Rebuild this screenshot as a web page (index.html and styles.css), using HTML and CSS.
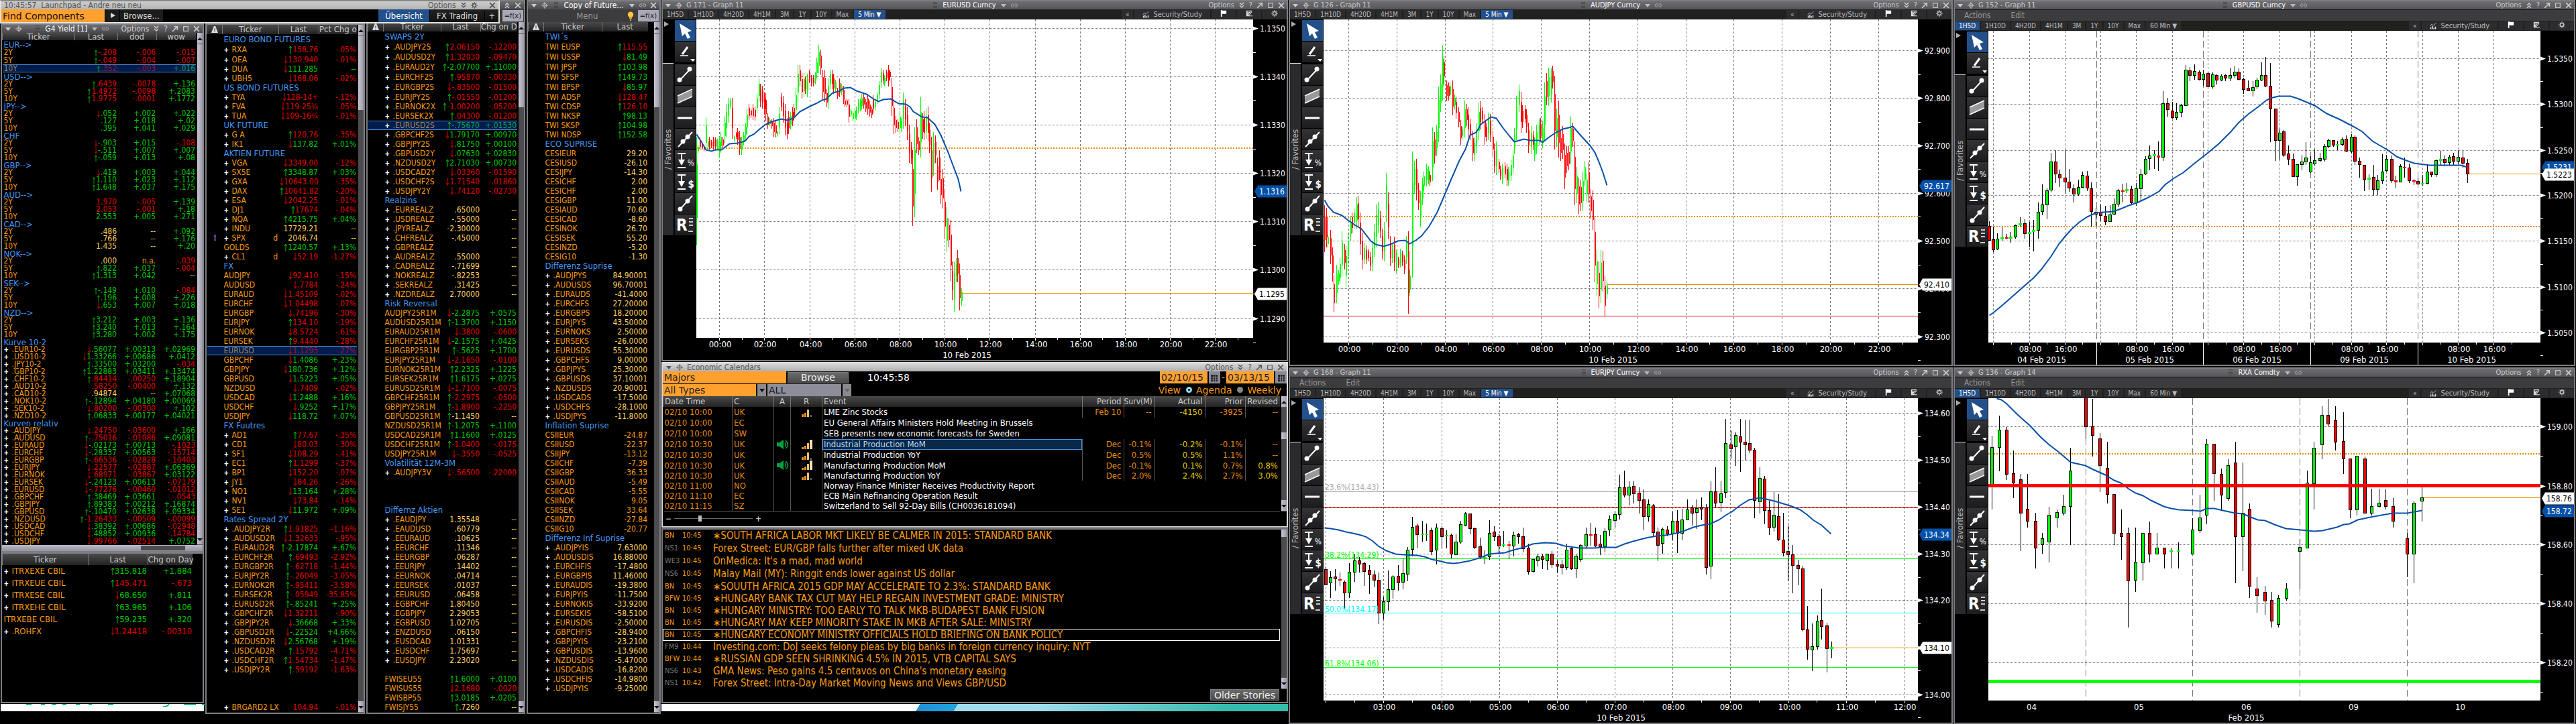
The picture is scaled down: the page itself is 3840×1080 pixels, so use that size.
FILE: index.html
```html
<!DOCTYPE html>
<html lang="de">
<head>
    <meta charset="UTF-8">
    <meta name="viewport" content="width=device-width, initial-scale=1.0">
    <title>Launchpad - Andre neu neu</title>
    <link rel="stylesheet" href="styles.css">
</head>
<body>
    <svg class="sprite" width="0" height="0" aria-hidden="true">
        <symbol id="i-down" viewBox="0 0 10 10"><path d="M1 3h8L5 8z" fill="currentColor"/></symbol>
        <symbol id="i-right" viewBox="0 0 10 10"><path d="M2 1l7 4-7 4z" fill="currentColor"/></symbol>
        <symbol id="i-target" viewBox="0 0 12 12"><circle cx="6" cy="6" r="3.500" fill="none" stroke="currentColor"/><path d="M6 0v12M0 6h12" stroke="currentColor"/></symbol>
        <symbol id="i-grip" viewBox="0 0 6 10"><path d="M1 0v10M3 0v10M5 0v10" stroke="#333" stroke-dasharray="1 1"/></symbol>
        <symbol id="i-link" viewBox="0 0 12 8"><path d="M5 1.500H3a2.500 2.500 0 0 0 0 5h2M7 1.500h2a2.500 2.500 0 0 1 0 5H7M4 4h4" fill="none" stroke="currentColor"/></symbol>
        <symbol id="i-more" viewBox="0 0 8 10"><path d="M1 1l3 3 3-3M1 5l3 3 3-3" fill="none" stroke="currentColor" stroke-width="1.500"/></symbol>
        <symbol id="i-less" viewBox="0 0 8 10"><path d="M1 5l3-3 3 3M1 9l3-3 3 3" fill="none" stroke="currentColor" stroke-width="1.500"/></symbol>
        <symbol id="i-pop" viewBox="0 0 9 9"><path d="M1 8l6-6M3 1.500h4.500V6" fill="none" stroke="currentColor" stroke-width="1.400"/></symbol>
        <symbol id="i-max" viewBox="0 0 9 9"><rect x="1.500" y="1.500" width="6" height="6" fill="none" stroke="currentColor"/></symbol>
        <symbol id="i-close" viewBox="0 0 9 9"><path d="M1 1l7 7M8 1L1 8" stroke="currentColor" stroke-width="1.400"/></symbol>
        <symbol id="i-gear" viewBox="0 0 12 12"><circle cx="6" cy="6" r="3" fill="none" stroke="currentColor" stroke-width="1.600"/><path d="M6 0v3M6 9v3M0 6h3M9 6h3M2 2l2 2M8 8l2 2M10 2L8 4M4 8l-2 2" stroke="currentColor" stroke-width="1.400"/></symbol>
        <symbol id="i-flag" viewBox="0 0 12 12"><path d="M1 0h2v1h8v6H3v5H1z" fill="#fff"/></symbol>
        <symbol id="i-note" viewBox="0 0 12 12"><path d="M1 1h10v3L6 10h6v1H1z" fill="#ddd"/><path d="M3 3h5M3 5h3M10 2L5 9" stroke="#222"/></symbol>
        <symbol id="i-study" viewBox="0 0 13 12"><path d="M1 6l3-4 3 3 5-5" fill="none" stroke="#ddd"/><path d="M2 12V8M5 12V6M8 12V9M11 12V7" stroke="#ddd" stroke-width="2"/></symbol>
        <symbol id="i-bulb" viewBox="0 0 10 15"><circle cx="5" cy="5" r="4.500" fill="#ffc83c"/><path d="M3 9h4v3H3z" fill="#e8a820"/><path d="M4 13h2v2H4z" fill="#ccc"/></symbol>
        <symbol id="i-warn" viewBox="0 0 9 9"><path d="M3.500 0h2L9 9H0z" fill="#ddd"/><path d="M4.500 3v3M4.500 7v1" stroke="#333"/></symbol>
        <symbol id="i-up" viewBox="0 0 6 12"><path d="M3 1v11M1 4l2-3 2 3" fill="none" stroke="#00c800"/></symbol>
        <symbol id="i-dn" viewBox="0 0 6 12"><path d="M3 0v11M1 8l2 3 2-3" fill="none" stroke="#a80000" stroke-width="1.300"/></symbol>
        <symbol id="i-bars4" viewBox="0 0 16 14"><path d="M0 11h3v3H0zM4 9h3v5H4z" fill="#e89020"/><path d="M8 5h3v9H8z" fill="#ffc070"/><path d="M12 0h4v14h-4z" fill="#ffe0b0"/></symbol>
        <symbol id="i-bars3" viewBox="0 0 16 14"><path d="M0 10h3v4H0zM4 8h3v6H4z" fill="#e89020"/><path d="M8 3h3v11H8z" fill="#ffc070"/><path d="M12 11h3v3h-3z" fill="#555"/></symbol>
        <symbol id="i-sound" viewBox="0 0 18 14"><path d="M0 4h4l6-4v14l-6-4H0z" fill="#00a040"/><path d="M12 4q3 3 0 6M13 1q7 6 0 12" fill="none" stroke="#00a040" stroke-width="1.500"/></symbol>
        <symbol id="i-cal" viewBox="0 0 10 10"><rect width="10" height="10" fill="#222"/><path d="M0 3.500h10M0 6.500h10M3.500 1v9M6.500 1v9" stroke="#8a8a98"/></symbol>
        <symbol id="t-cursor" viewBox="0 0 31 31"><path d="M7 5l18 11-6 2 4 8-4 2-4-8-4 4z" fill="#fff"/></symbol>
        <symbol id="t-draw" viewBox="0 0 31 31"><path d="M19 8l-8 11" stroke="#fff" stroke-width="3"/><path d="M8 21h12" stroke="#fff" stroke-width="1.500"/><path d="M23 26h7l-3 4z" fill="#fff"/></symbol>
        <symbol id="t-trend" viewBox="0 0 31 31"><path d="M8 23L22 8" stroke="#fff" stroke-width="2"/><circle cx="7" cy="23" r="3.500" fill="#fff"/><circle cx="22" cy="7" r="3.500" fill="#fff"/></symbol>
        <symbol id="t-channel" viewBox="0 0 31 31"><path d="M4 15L26 5v11L4 26z" fill="#999"/><path d="M4 15L26 5M4 26l22-10" stroke="#fff" stroke-width="1.500"/></symbol>
        <symbol id="t-hline" viewBox="0 0 31 31"><path d="M4 16h22" stroke="#fff" stroke-width="3"/></symbol>
        <symbol id="t-ray" viewBox="0 0 31 31"><path d="M5 27L26 5" stroke="#fff" stroke-width="2"/><circle cx="12" cy="19" r="3.500" fill="#fff"/><circle cx="19" cy="12" r="3.500" fill="#fff"/></symbol>
        <symbol id="t-range" viewBox="0 0 31 31"><path d="M4 5h12M10 5v12M4 26h12" stroke="#fff" stroke-width="2"/><path d="M5 14h10l-5 9z" fill="#fff"/></symbol>
        <symbol id="t-seg" viewBox="0 0 31 31"><path d="M8 24L26 4" stroke="#fff" stroke-width="2"/><circle cx="8" cy="24" r="3.500" fill="#fff"/><circle cx="19" cy="12" r="3.500" fill="#fff"/></symbol>
        <symbol id="t-reg" viewBox="0 0 31 31"><path d="M21 6h6M21 11h6M21 16h6M20 25h7" stroke="#fff" stroke-width="1.500"/></symbol>
    </svg>

    <div class="desk">
        <header class="launchpad">
            <div class="lp-title">
                <span>10:45:57&nbsp; Launchpad - Andre neu neu</span>
                <span class="tools"><span>Options</span><svg class="ic"><use href="#i-more"/></svg><svg class="ic gap"><use href="#i-gear"/></svg><span>_</span><svg class="ic"><use href="#i-close"/></svg></span>
            </div>
            <div class="lp-bar">
                <input class="find" type="text" value="Find Components" aria-label="Find Components">
                <button class="lp-btn go" aria-label="Go"><svg class="ic"><use href="#i-right"/></svg></button>
                <button class="lp-btn">Browse...</button>
                <span class="spacer"></span>
                <button class="lp-tab active">Übersicht</button>
                <button class="lp-tab">FX Trading</button>
                <button class="lp-tab">+</button>
            </div>
        </header>

        <section class="col col-a">
            <div class="win">
                <div class="win-title">
                    <span class="tools"><svg class="ic"><use href="#i-down"/></svg><svg class="ic"><use href="#i-target"/></svg></span>
                    <span class="tools name"><svg class="ic"><use href="#i-grip"/></svg>G4 Yield [1]<svg class="ic"><use href="#i-down"/></svg><svg class="ic"><use href="#i-link"/></svg></span>
                    <span class="tools"><span>Options</span><svg class="ic"><use href="#i-more"/></svg><span>?</span><svg class="ic"><use href="#i-pop"/></svg><svg class="ic"><use href="#i-max"/></svg><svg class="ic"><use href="#i-close"/></svg></span>
                </div>
                <div class="win-body">
                    <table class="quotes dense" id="yields"></table>
                    <div class="scroll full"><i class="up"></i><i class="dn"></i></div>
                </div>
                <div class="hscroll"><i></i></div>
            </div>
            <div class="win grow">
                <table class="quotes roomy" id="itraxx"></table>
            </div>
            <div class="wallpaper"><svg width="304" height="5"><path d="M38 1h8M60 1h6M76 1h7M92 1h6M112 1h6M131 1h5M160 1h8M242 4q6 1 9-4M273 1h18M300 1h4" fill="none" stroke="#10c080" stroke-width="2"/></svg></div>
        </section>

        <section class="col col-b">
            <div class="win grow">
                <div class="win-body">
                    <table class="quotes" id="futures"></table>
                    <div class="scroll"><i class="up"></i><i class="thumb"></i><i class="dn"></i></div>
                </div>
            </div>
        </section>

        <section class="col col-c">
            <div class="win grow">
                <div class="win-title"><span></span><span class="tools"><svg class="ic"><use href="#i-less"/></svg><svg class="ic"><use href="#i-close"/></svg></span></div>
                <div class="win-menu"><span></span><button class="fx">=f(x)</button></div>
                <div class="win-body">
                    <table class="quotes" id="swaps"></table>
                    <div class="scroll"><i class="up"></i><i class="thumb"></i><i class="dn"></i></div>
                </div>
            </div>
        </section>

        <section class="col col-d">
            <div class="win grow">
                <div class="win-title">
                    <span class="tools"><svg class="ic"><use href="#i-down"/></svg><svg class="ic"><use href="#i-target"/></svg></span>
                    <span class="tools name"><svg class="ic"><use href="#i-grip"/></svg>Copy of Future...</span>
                    <span class="tools"><svg class="ic"><use href="#i-down"/></svg><svg class="ic"><use href="#i-link"/></svg><svg class="ic"><use href="#i-close"/></svg></span>
                </div>
                <div class="win-menu"><span class="menu-word">Menu</span><svg class="bulb"><use href="#i-bulb"/></svg><button class="fx">=f(x)</button></div>
                <div class="win-body wide-gap">
                    <table class="quotes" id="twi"></table>
                    <div class="scroll"><i class="up"></i><i class="thumb"></i><i class="dn"></i></div>
                </div>
            </div>
        </section>

        <section class="col col-e">
            <div class="chart-win" data-chart="eurusd"></div>

            <div class="win light calendar">
                <div class="win-title">
                    <span class="tools"><svg class="ic"><use href="#i-down"/></svg><svg class="ic"><use href="#i-target"/></svg><span>Economic Calendars</span></span>
                    <span class="tools"><span>Options</span><svg class="ic"><use href="#i-more"/></svg><span>?</span><svg class="ic"><use href="#i-pop"/></svg><svg class="ic"><use href="#i-max"/></svg><svg class="ic"><use href="#i-close"/></svg></span>
                </div>
                <div class="cal-row">
                    <input class="amber majors" type="text" value="Majors" aria-label="Region">
                    <button class="grey-btn browse">Browse</button>
                    <span class="clock">10:45:58</span>
                    <span class="spacer"></span>
                    <input class="amber date" type="text" value="02/10/15" aria-label="From">
                    <button class="cal-btn" aria-label="Pick start date"><svg class="ic"><use href="#i-cal"/></svg></button>
                    <span class="amber-text">-</span>
                    <input class="amber date" type="text" value="03/13/15" aria-label="To">
                    <button class="cal-btn" aria-label="Pick end date"><svg class="ic"><use href="#i-cal"/></svg></button>
                </div>
                <div class="cal-row">
                    <select class="amber types" aria-label="Event types"><option>All Types</option></select>
                    <span class="pick"><svg class="ic"><use href="#i-down"/></svg></span>
                    <select class="all" aria-label="Filter"><option>ALL</option></select>
                    <span class="pick off"><svg class="ic"><use href="#i-down"/></svg></span>
                    <span class="spacer"></span>
                    <span class="amber-text view">View
                        <label><input type="radio" name="view" checked>Agenda</label>
                        <label><input type="radio" name="view">Weekly</label>
                    </span>
                </div>
                <div class="win-body">
                    <table class="events">
                        <colgroup><col class="w-date"><col class="w-c"><col class="w-a"><col class="w-r"><col><col class="w-period"><col class="w-surv"><col class="w-actual"><col class="w-prior"><col class="w-rev"></colgroup>
                        <thead>
                            <tr><th>Date Time</th><th>C</th><th class="mid">A</th><th class="mid">R</th><th>Event</th><th class="num">Period</th><th class="surv">Surv(M)</th><th class="num">Actual</th><th class="num">Prior</th><th class="num">Revised</th></tr>
                        </thead>
                        <tbody>
                            <tr><td>02/10 10:00</td><td>UK</td><td></td><td class="mid"><svg class="sig"><use href="#i-bars3"/></svg></td><td class="ev">LME Zinc Stocks</td><td class="num">Feb 10</td><td class="num">--</td><td class="num act">-4150</td><td class="num">-3925</td><td class="num">--</td></tr>
                            <tr><td>02/10 10:00</td><td>EC</td><td></td><td></td><td class="ev" colspan="6">EU General Affairs Ministers Hold Meeting in Brussels</td></tr>
                            <tr><td>02/10 10:00</td><td>SW</td><td></td><td></td><td class="ev" colspan="6">SEB presents new economic forecasts for Sweden</td></tr>
                            <tr><td>02/10 10:30</td><td>UK</td><td class="mid"><svg class="snd"><use href="#i-sound"/></svg></td><td class="mid"><svg class="sig"><use href="#i-bars4"/></svg></td><td class="ev picked">Industrial Production MoM</td><td class="num">Dec</td><td class="num">-0.1%</td><td class="num act">-0.2%</td><td class="num">-0.1%</td><td class="num">--</td></tr>
                            <tr><td>02/10 10:30</td><td>UK</td><td></td><td class="mid"><svg class="sig"><use href="#i-bars3"/></svg></td><td class="ev">Industrial Production YoY</td><td class="num">Dec</td><td class="num">0.5%</td><td class="num act">0.5%</td><td class="num">1.1%</td><td class="num">--</td></tr>
                            <tr><td>02/10 10:30</td><td>UK</td><td class="mid"><svg class="snd"><use href="#i-sound"/></svg></td><td class="mid"><svg class="sig"><use href="#i-bars4"/></svg></td><td class="ev">Manufacturing Production MoM</td><td class="num">Dec</td><td class="num">-0.1%</td><td class="num act">0.1%</td><td class="num">0.7%</td><td class="num act">0.8%</td></tr>
                            <tr><td>02/10 10:30</td><td>UK</td><td></td><td class="mid"><svg class="sig"><use href="#i-bars3"/></svg></td><td class="ev">Manufacturing Production YoY</td><td class="num">Dec</td><td class="num">2.0%</td><td class="num act">2.4%</td><td class="num">2.7%</td><td class="num act">3.0%</td></tr>
                            <tr><td>02/10 11:00</td><td>NO</td><td></td><td></td><td class="ev" colspan="6">Norway Finance Minister Receives Productivity Report</td></tr>
                            <tr><td>02/10 11:10</td><td>EC</td><td></td><td></td><td class="ev" colspan="6">ECB Main Refinancing Operation Result</td></tr>
                            <tr><td>02/10 11:15</td><td>SZ</td><td></td><td></td><td class="ev" colspan="6">Switzerland to Sell 92-Day Bills (CH0036181094)</td></tr>
                        </tbody>
                    </table>
                    <div class="scroll mid-thumb"><i class="up"></i><i class="thumb"></i><i class="dn"></i></div>
                </div>
                <div class="zoom-row"><span>−</span><input type="range" value="32" aria-label="Zoom"><span>+</span></div>
            </div>

            <div class="win news">
                <div class="win-body">
                    <ul class="stories">
                        <li><b>BN</b><time>10:45</time>∗SOUTH AFRICA LABOR MKT LIKELY BE CALMER IN 2015: STANDARD BANK</li>
                        <li><b class="dim">NS1</b><time>10:45</time>Forex Street: EUR/GBP falls further after mixed UK data</li>
                        <li><b class="dim">WE3</b><time>10:45</time>OnMedica: It's a mad, mad world</li>
                        <li><b class="dim">NS6</b><time>10:45</time>Malay Mail (MY): Ringgit ends lower against US dollar</li>
                        <li><b>BN</b><time>10:45</time>∗SOUUTH AFRICA 2015 GDP MAY ACCELERATE TO 2.3%: STANDARD BANK</li>
                        <li><b>BFW</b><time>10:45</time>∗HUNGARY BANK TAX CUT MAY HELP REGAIN INVESTMENT GRADE: MINISTRY</li>
                        <li><b>BN</b><time>10:45</time>∗HUNGARY MINISTRY: TOO EARLY TO TALK MKB-BUDAPEST BANK FUSION</li>
                        <li><b>BN</b><time>10:45</time>∗HUNGARY MAY KEEP MINORITY STAKE IN MKB AFTER SALE: MINISTRY</li>
                        <li class="boxed"><b>BN</b><time>10:45</time>∗HUNGARY ECONOMY MINISTRY OFFICIALS HOLD BRIEFING ON BANK POLICY</li>
                        <li><b class="dim">FM9</b><time>10:44</time>Investing.com: DoJ seeks felony pleas by big banks in foreign currency inquiry: NYT</li>
                        <li><b>BFW</b><time>10:44</time>∗RUSSIAN GDP SEEN SHRINKING 4.5% IN 2015, VTB CAPITAL SAYS</li>
                        <li><b class="dim">NS6</b><time>10:43</time>GMA News: Peso gains 4.5 centavos on China's monetary easing</li>
                        <li><b class="dim">NS1</b><time>10:42</time>Forex Street: Intra-Day Market Moving News and Views GBP/USD</li>
                    </ul>
                    <div class="scroll low-thumb"><i class="thumb"></i><i class="dn"></i></div>
                </div>
                <div class="news-foot"><button class="grey-btn">Older Stories</button></div>
            </div>
            <div class="wallpaper swoosh"></div>
        </section>

        <section class="col col-f">
            <div class="chart-win" data-chart="audjpy"></div>
            <div class="chart-win" data-chart="eurjpy"></div>
        </section>

        <section class="col col-f">
            <div class="chart-win" data-chart="gbpusd"></div>
            <div class="chart-win" data-chart="rxa"></div>
        </section>
    </div>

    <script src="script.js"></script>
</body>
</html>
```
FILE: styles.css
```css
* {
    box-sizing: border-box;
}
body {
    margin: 0;
    background: #000;
    color: #ccc;
    font-family: "DejaVu Sans Condensed", "DejaVu Sans", sans-serif;
    font-size: 12px;
    line-height: 14px;
}
button, input, select {
    font-family: inherit;
    margin: 0;
    padding: 0;
    border: 0;
    border-radius: 0;
}
.sprite {
    position: absolute;
}
.desk {
    position: relative;
    display: grid;
    grid-template-columns: minmax(0, 305fr) minmax(0, 240fr) minmax(0, 239fr) minmax(0, 202fr) minmax(0, 935fr) minmax(0, 991fr) minmax(0, 928fr);
    min-height: 100vh;
}
.col {
    display: flex;
    flex-direction: column;
    min-width: 0;
}
.col-a {
    padding: 35px 1px 19px 1px;
}
.col-b {
    padding: 35px 1px 15px;
}
.col-c, .col-d {
    padding: 0 1px 15px;
}
.col-e {
    padding: 0 1px 19px 0;
    gap: 1px;
}
.col-f {
    display: grid;
    grid-template-rows: 546fr 532fr;
    gap: 2px;
    padding-right: 1px;
}
.grow {
    flex: 1;
}
.spacer {
    flex: 1;
}
.ic {
    width: 10px;
    height: 10px;
    flex: none;
}

/* launchpad strip */
.launchpad {
    position: absolute;
    z-index: 2;
    top: 0;
    left: 0;
    width: 19.4%;
    height: 35px;
    border: 2px solid #e4e4dc;
    border-top-color: #888;
    background: #000;
    font-size: 12px;
}
.lp-title {
    display: flex;
    justify-content: space-between;
    height: 12px;
    padding: 0 4px;
    background: linear-gradient(#ccc, #b4b4b4);
    color: #555;
    line-height: 12px;
}
.lp-bar {
    display: flex;
    gap: 1px;
    height: 19px;
}
.find {
    width: 154px;
    padding-left: 2px;
    background: #ffa02f;
    color: #111;
    font-family: "DejaVu Sans", sans-serif;
    font-size: 14px;
}
.lp-btn, .lp-tab {
    padding: 0 5px;
    background: #1c1c1c;
    color: #ddd;
    font-size: 13px;
}
.lp-btn.go {
    width: 21px;
}
.lp-tab {
    padding: 0 10px;
    background: linear-gradient(#222, #111);
}
.lp-tab:last-child {
    padding: 0 5px;
}
.lp-tab.active {
    background: #24508a;
    color: #fff;
}

/* windows */
.win {
    display: flex;
    flex-direction: column;
    border: 2px solid #7d7d82;
    background: #000;
}
.win-title {
    display: flex;
    justify-content: space-between;
    height: 12px;
    padding: 0 4px;
    background: linear-gradient(#6e6e72, #4a4a4e);
    line-height: 12px;
}
.light {
    border-color: #dcdcdc;
}
.light .win-title {
    background: linear-gradient(#d8d8d8, #b0b0b0);
    color: #555;
}
.tools {
    display: flex;
    align-items: center;
    gap: 6px;
}
.tools.name {
    color: #fff;
}
.tools.name .ic {
    color: #bbb;
}
.win-menu {
    display: flex;
    justify-content: space-between;
    align-items: center;
    height: 19px;
    padding: 0 1px;
    background: #3c3c3e;
}
.menu-word {
    flex: 1;
    padding-left: 34px;
    color: #999;
    font-size: 13px;
    text-align: center;
}
.bulb {
    width: 10px;
    height: 14px;
    margin: 0 6px;
}
.fx {
    height: 17px;
    padding: 0 3px;
    background: #a9a9b8;
    color: #222;
    font-size: 11px;
}
.win-body {
    display: flex;
    flex: 1;
    align-items: flex-start;
    gap: 2px;
}
.win-body.wide-gap {
    gap: 9px;
}
.scroll {
    display: flex;
    flex: none;
    flex-direction: column;
    align-self: stretch;
    width: 8px;
    background: #4c4c4e;
}
.scroll i {
    background: linear-gradient(90deg, #c8c8d4, #9a9aa8);
}
.scroll .up, .scroll .dn {
    height: 17px;
    border-bottom: 1px solid #555;
}
.scroll .up::before, .scroll .dn::before {
    content: "";
    display: block;
    margin-top: 7px;
    border: 4px solid transparent;
    border-top: 0;
    border-bottom: 4px solid #111;
}
.scroll .dn {
    margin-top: auto;
}
.scroll .dn::before {
    border-top: 4px solid #111;
    border-bottom: 0;
}
.scroll .thumb {
    height: 110px;
}
.scroll.full {
    background: linear-gradient(90deg, #c8c8d4, #9a9aa8);
}
.scroll.mid-thumb .thumb {
    height: 10px;
    margin-top: 37px;
}
.scroll.low-thumb .thumb {
    height: 11px;
}
.hscroll {
    height: 9px;
    padding: 1px 26px 1px 85px;
    background: linear-gradient(#bbbbc8, #9292a0);
}
.hscroll i {
    display: block;
    width: 66px;
    height: 7px;
    margin-left: auto;
    background: #4c4c4e;
}

/* quote tables */
table {
    flex: 1;
    width: 100%;
    table-layout: fixed;
    border-collapse: collapse;
}
th {
    padding: 0;
    border-left: 1px solid #777;
    background: linear-gradient(#4a4a4a, #222);
    color: #ccc;
    font-size: 13px;
    font-weight: normal;
    white-space: nowrap;
}
td {
    padding: 0 1px 0 2px;
    white-space: nowrap;
}
.quotes tr {
    height: 14px;
}
.quotes tbody tr:nth-child(-n+3) {
    height: 15px;
}
#swaps tbody tr:nth-child(-n+7), #twi tbody tr:nth-child(-n+7) {
    height: 15px;
}
.quotes td, .quotes th {
    line-height: 14px;
}
.quotes th .ic {
    display: block;
    margin: 0 auto;
}
.quotes.dense tr, .quotes.dense tbody tr {
    height: 11px;
}
.quotes.dense tbody tr:nth-child(-n+5) {
    height: 12px;
}
.quotes.dense td, .quotes.dense th {
    line-height: 11px;
}
.quotes.roomy {
    flex: none;
    width: 95%;
    font-size: 13px;
}
.quotes.roomy tbody tr {
    height: 18px;
}
.quotes.roomy td {
    line-height: 18px;
}
.quotes.roomy th {
    line-height: 17px;
}
.num, .quotes td.num {
    text-align: right;
}
.mid {
    text-align: center;
}
.ticker {
    color: #f59a14;
}
.ticker.open::before {
    content: "+";
    display: inline-block;
    width: 12px;
    color: #fff;
    font-size: 10px;
    font-weight: bold;
    line-height: 10px;
}
.ticker .flag {
    float: right;
}
.bang {
    color: #a060e0;
    font-weight: bold;
    text-align: center;
}
.section {
    color: #4496f0;
    font-size: 13px;
}
.g { color: #00c800; }
.r { color: #e00000; }
.y { color: #ffd060; }
.o { color: #f59a14; }
.arrow {
    width: 6px;
    height: 12px;
    margin-top: 1px;
    vertical-align: top;
}
.dense .arrow {
    height: 10px;
}
.roomy .arrow {
    margin-top: 3px;
}
.sel {
    background: #001c4c;
    box-shadow: inset 0 1px #4a90d8, inset 0 -1px #4a90d8;
}
.sel .ticker {
    color: #a08868;
}
.sel .r {
    color: #a01040;
}
.sel .g {
    color: #10a058;
}

.wallpaper {
    height: 11px;
    margin-top: 1px;
    background: #fff;
    line-height: 5px;
}
.wallpaper svg {
    display: block;
}
.swoosh {
    margin: 0;
    background: linear-gradient(120deg, #fff 41%, #2090d8 41%, #20a4dc 47%, #a0dcec 47%, #a0dcec 60%, #34bcac 90%);
}

/* economic calendar */
.calendar {
    height: 247px;
}
.cal-row {
    display: flex;
    align-items: center;
    height: 19px;
    gap: 2px;
    color: #fff;
    font-family: "DejaVu Sans", sans-serif;
    font-size: 14px;
}
.cal-row input[type="text"], .cal-row select {
    height: 18px;
    padding-left: 2px;
    font-size: 14px;
    appearance: none;
}
.cal-row .amber {
    background: #ffa02f;
    color: #222;
}
.majors {
    width: 184px;
}
.types {
    width: 139px;
}
.all {
    width: 110px;
    background: #8e8e9a;
    color: #111;
}
.date {
    width: 71px;
}
.pick {
    display: flex;
    align-items: center;
    justify-content: center;
    width: 13px;
    height: 18px;
    background: #8a8a8e;
    color: #111;
}
.pick.off {
    color: #666;
}
.grey-btn {
    height: 17px;
    padding: 0 5px;
    border: 1px solid #777;
    background: linear-gradient(#6a6a6a, #4a4a4a);
    color: #eee;
    font-family: "DejaVu Sans", sans-serif;
    font-size: 14px;
    line-height: 14px;
}
.browse {
    width: 91px;
}
.clock {
    margin-left: 26px;
}
.cal-btn {
    width: 17px;
    height: 18px;
    padding-top: 2px;
    background: #8a8a98;
    line-height: 10px;
}
.amber-text {
    color: #f59a14;
}
.view {
    display: flex;
    gap: 8px;
    padding-right: 8px;
}
.view label {
    display: flex;
    align-items: center;
    gap: 6px;
}
.view input {
    width: 9px;
    height: 9px;
    border-radius: 50%;
    background: #888;
    appearance: none;
}
.view input:checked {
    border: 3px solid #90d8f4;
    background: #000;
}
.events {
    border-bottom: 1px solid #555;
    font-size: 13px;
}
.events th {
    height: 16px;
    padding: 0 2px;
    text-align: left;
}
.events .num {
    padding-right: 3px;
    text-align: right;
}
.events th.surv {
    padding: 0;
    font-size: 12px;
}
.events .mid {
    text-align: center;
}
.events tbody tr {
    height: 15px;
}
.events tbody tr:nth-child(-n+5) {
    height: 16px;
}
.events td {
    border-left: 1px solid #555;
    color: #e88a10;
    line-height: 15px;
}
.events td:first-child {
    border-left: 0;
}
.events .ev {
    color: #fff;
}
.events .act {
    color: #e0c800;
}
.events .picked {
    background: #0a2848;
    box-shadow: inset 0 0 0 1px #4a90d8;
    color: #b8d8f8;
}
.w-date { width: 103px; }
.w-c { width: 62px; }
.w-a { width: 25px; }
.w-r { width: 47px; }
.w-period { width: 62px; }
.w-surv { width: 45px; }
.w-actual { width: 76px; }
.w-prior { width: 60px; }
.w-rev { width: 52px; }
.sig, .snd {
    display: block;
    width: 16px;
    height: 14px;
    margin: 0 auto;
}
.snd {
    width: 18px;
}
.zoom-row {
    display: flex;
    align-items: center;
    gap: 4px;
    height: 23px;
    padding: 0 4px;
    color: #bbb;
    font-weight: bold;
}
.zoom-row input {
    width: 117px;
    height: 9px;
    background: linear-gradient(#666, #666) center / 100% 1px no-repeat;
    appearance: none;
}
.zoom-row input::-webkit-slider-thumb {
    width: 5px;
    height: 9px;
    background: #bbb;
    appearance: none;
}

/* news */
.news {
    height: 261px;
}
.stories {
    flex: 1;
    margin: 0;
    padding: 0;
    list-style: none;
}
.stories li {
    display: flex;
    height: 18px;
    padding-left: 3px;
    color: #f59a14;
    font-size: 15px;
    line-height: 18px;
    white-space: nowrap;
}
.stories li:nth-child(-n+4) {
    height: 19px;
}
.stories b {
    width: 26px;
    font-size: 11px;
    font-weight: normal;
}
.stories time {
    width: 46px;
    font-size: 11px;
}
.stories .dim {
    color: #777;
}
.stories .boxed {
    box-shadow: inset 0 0 0 1px #fff;
}
.news-foot {
    height: 19px;
    padding-right: 11px;
    text-align: right;
}

/* chart windows */
.chart-win {
    display: flex;
    flex-direction: column;
    flex: 1;
    min-height: 320px;
    border: 2px solid #7d7d82;
    background: #000;
    font-size: 11px;
}
.chart-title {
    display: grid;
    grid-template-columns: 1fr auto 1fr;
    height: 12px;
    padding: 0 3px;
    background: linear-gradient(#6e6e72, #55555a);
    line-height: 12px;
}
.chart-title .tools:last-child {
    justify-content: flex-end;
}
.chart-menu {
    display: flex;
    gap: 30px;
    height: 17px;
    padding: 0 14px;
    border-top: 1px solid #111;
    background: #3c3c3e;
    color: #999;
    font-size: 12px;
    line-height: 16px;
}
.chart-bar {
    display: flex;
    gap: 2px;
    height: 15px;
    padding: 1px 0;
    background: #20201e;
}
.chart-bar button {
    padding: 0 6px;
    background: #2c2c2e;
    color: #bbb;
    font-size: 10px;
    line-height: 12px;
}
.chart-bar button.on {
    background: #24508a;
    color: #fff;
}
.chart-bar .study {
    display: flex;
    align-items: center;
    gap: 6px;
    padding: 0 12px;
    font-size: 11px;
}
.chart-bar .wide {
    width: 36px;
}
.chart-main {
    display: flex;
    flex: 1;
    min-height: 0;
}
.palette {
    display: flex;
    flex: none;
    gap: 2px;
    width: 50px;
}
.fav {
    width: 16px;
}
.fav .knob {
    height: 66px;
    padding-top: 2px;
    border-bottom: 1px solid #ddd;
    color: #aaa;
}
.fav .label {
    height: 256px;
    background: #2a2a2c;
    color: #bbb;
    font-size: 13px;
    line-height: 16px;
    text-align: center;
    writing-mode: vertical-rl;
    transform: rotate(180deg);
}
.tool-list {
    display: flex;
    flex-direction: column;
    gap: 1px;
    padding-top: 1px;
}
.tool-list button {
    position: relative;
    width: 31px;
    height: 31px;
    background: linear-gradient(#343436, #1c1c1e);
}
.tool-list button:nth-child(2) {
    margin-bottom: 2px;
}
.tool-list button:first-child {
    background: #24508a;
}
.tool-list svg {
    display: block;
    width: 31px;
    height: 31px;
}
.tool-list span {
    position: absolute;
    right: 2px;
    bottom: 5px;
    color: #fff;
    font-size: 12px;
    line-height: 14px;
}
.tool-list .tool-usd {
    font-size: 15px;
    font-weight: bold;
}
.tool-list .tool-reg {
    left: 2px;
    right: auto;
    font-size: 24px;
    font-weight: bold;
    line-height: 24px;
    bottom: 3px;
}
.plot {
    flex: 1;
    min-width: 0;
    min-height: 0;
    overflow: hidden;
}
.plot svg {
    display: block;
}
.plot text {
    fill: #fff;
    font-size: 12px;
}
.plot .time {
    font-size: 13px;
    text-anchor: middle;
}
.plot line {
    shape-rendering: crispEdges;
}
.plot .tag-dark {
    fill: #000;
}
```
FILE: script.js
```js
// ---------- quote tables ----------
// row: "#section" or "[*selected][!alert][+expandable]name[~flag]|cell|cell"
// cell: [^ or v arrow][g r y o colour]value

const lists = {
    yields: {
        head: ['Ticker', 'Last', 'dod', 'wow'], widths: [0, 64, 58, 59], rows: `
#EUR-->
2Y|^r-.208|r-.006|r-.015
5Y|^r-.049|r-.004|r-.007
*10Y|^r.352|r-.003|g+.016
#USD-->
2Y|^r.6439|r-.0078|g+.136
5Y|^r1.4972|r-.0098|g+.2083
10Y|^r1.9775|r-.0001|g+.1772
#JPY-->
2Y|vg.052|g+.002|g+.022
5Y|g.127|g+.018|g+.02
10Y|g.395|g+.041|g+.029
#CHF
2Y|vg-.903|g+.015|r-.108
5Y|vg-.511|g+.007|g+.007
10Y|^g-.059|g+.013|g+.08
#GBP-->
2Y|vg.419|g+.003|g+.044
5Y|^g1.110|g+.023|g+.112
10Y|^g1.648|g+.037|g+.175
#AUD-->
2Y|r1.970|r-.005|g+.139
5Y|r2.053|r-.001|g+.18
10Y|g2.553|g+.005|g+.271
#CAD-->
2Y|y.486|y--|g+.092
5Y|y.766|y--|g+.176
10Y|y1.435|y--|g+.20
#NOK-->
2Y|y.000|on.a.|r-.039
5Y|^g.822|g+.037|r-.004
10Y|^g1.313|g+.042|y--
#SEK-->
2Y|^g-.149|g+.010|r-.084
5Y|^g.196|g+.008|g+.226
10Y|vg.653|g+.007|g+.018
#NZD-->
2Y|^g3.212|g+.003|g+.136
5Y|^g3.240|g+.013|g+.164
10Y|^g3.280|g+.002|g+.175
#Kurve 10-2
+.EUR10-2|vg.56077|g+.00313|g+.02969
+.USD10-2|vg1.33266|g+.00686|g+.0412
+.JPY10-2|^g.33500|g+.03200|r-.034
+.GBP10-2|^g1.22883|g+.03411|g+.13474
+.CHF10-2|^r.84414|r-.00250|g+.18904
+.AUD10-2|r.58250|r-.00400|g+.132
+.CAD10-2|y.94874|y--|g+.07068
+.NOK10-2|^g-.12894|g+.04180|g+.00069
+.SEK10-2|vr.80200|r-.00300|g+.102
+.NZD10-2|^g.06833|g+.00177|g+.04021
#Kurven relativ
+.AUDJPY|vr.24750|r-.03600|g+.166
+.AUDUSD|^r-.75016|r-.01086|g+.09081
+.EURAUD|vg-.02173|g+.00713|r-.1023
+.EURCHF|vg-.28337|g+.00563|r-.15714
+.EURGBP|^r-.66536|r-.02828|r-.10403
+.EURJPY|vr.22577|r-.02887|g+.06369
+.EURNOK|vr.68971|r-.03867|g+.03122
+.EURSEK|vg-.24123|g+.00613|r-.07179
+.EURUSD|vr-.77276|r-.00460|r-.01012
+.GBPCHF|^g.38469|g+.03661|r-.0543
+.GBPJPY|^g.89383|g+.00212|g+.16874
+.GBPUSD|^g-.10470|g+.02638|g+.09334
+.NZDUSD|^r-1.26433|r-.00509|r-.00099
+.USDCAD|vg.38392|g+.00686|r-.02948
+.USDCHF|vg.48852|g+.00936|r-.14784
+.USDJPY|vr.99766|r-.02514|g+.0752`
    },
    itraxx: {
        head: ['Ticker', 'Last', 'Chg on Day'], widths: [0, 89, 67], rows: `
+ITRXEXE CBIL|^g315.818|g+1.884
+ITRXEUE CBIL|^r145.471|r-.673
+ITRXESE CBIL|vg68.650|g+.811
+ITRXEHE CBIL|^g63.965|g+.106
ITRXEBE CBIL|^g59.235|g+.320
+.ROHFX|vr1.24418|r-.00310`
    },
    futures: {
        alert: true, head: ['Ticker', 'Last', 'Pct Chg o'], widths: [0, 60, 57], rows: `
#EURO BOND FUTURES
+RXA|^r158.76|r-.05%
+OEA|vr130.940|r-.01%
+DUA|vg111.285|g--
+UBH5|vr168.06|r-.02%
#US BOND FUTURES
+TYA|vr128-14+|r-.12%
+FVA|vr119-25¾|r-.05%
+TUA|vr109-16¾|r-.01%
#UK FUTURE
+G A|^r120.76|r-.35%
+IK1|vg137.82|g+.01%
#AKTIEN FUTURE
+VGA|vr3349.00|r-.12%
+SX5E|^g3348.87|g+.03%
+GXA|vr10643.00|r-.35%
+DAX|^r10641.82|r-.20%
+ESA|vr2042.25|r-.01%
+DJ1|^r17674|r-.04%
+NQA|^g4215.75|g+.04%
+INDU|y17729.21|y--
!+SPX~d|y2046.74|y--
GOLDS|^g1240.57|g+.13%
+CL1~d|vr52.19|r-1.27%
#FX
AUDJPY|vr92.410|r-.15%
AUDUSD|vr.7784|r-.24%
EURAUD|vr1.45109|r-.02%
EURCHF|vr1.04498|r-.07%
EURGBP|vr.74196|r-.30%
EURJPY|^r134.10|r-.19%
EURNOK|vr8.5724|r-.61%
EURSEK|^r9.4440|r-.28%
*EURUSD|vr1.1295|r-.27%
GBPCHF|vg1.4086|g+.23%
GBPJPY|vg180.736|g+.12%
GBPUSD|vg1.5223|g+.05%
NZDUSD|vr.7409|r-.02%
USDCAD|vg1.2488|g+.16%
USDCHF|vg.9252|g+.17%
USDJPY|vg118.72|g+.07%
#FX Fuutres
+AD1|^r77.67|r-.35%
+CD1|vr80.03|r-.30%
+SF1|vr108.29|r-.41%
+EC1|^r1.1299|r-.37%
+BP1|vr152.20|r-.07%
+JY1|vr84.26|r-.26%
+NO1|vg13.164|g+.28%
+NV1|vr73.84|r-.14%
+SE1|vg11.972|g+.09%
#Rates Spread 2Y
+.AUDJPY2R|^r1.91825|r-1.16%
+.AUDUSD2R|vr1.32633|r-.95%
+.EURAUD2R|^g-2.17874|g+.67%
+.EURCHF2R|^r.69493|r-2.92%
+.EURGBP2R|^r-.62718|r-1.44%
+.EURJPY2R|^r-.26049|r-3.05%
+.EURNOK2R|^r-.95411|r-3.58%
+.EURSEK2R|^r-.05949|r-35.85%
+.EURUSD2R|^g-.85241|g+.25%
+.GBPCHF2R|vr1.32211|r-.90%
+.GBPJPY2R|vg.36668|g+.33%
+.GBPUSD2R|vg-.22524|g+4.66%
+.NZDUSD2R|vg2.56768|g+.19%
+.USDCAD2R|^r.15792|r-4.71%
+.USDCHF2R|^r1.54734|r-1.47%
+.USDJPY2R|^r.59192|r-1.63%



+BRGARD2 LX|r104.94|r-.01%`
    },
    swaps: {
        alert: true, head: ['Ticker', 'Last', 'Chg on D'], widths: [0, 59, 55], rows: `
#SWAPS 2Y
+.AUDJPY2S|^r2.06150|r-.12200
+.AUDUSD2Y|^r1.32030|r-.09470
+.EURAUD2Y|^g-2.07700|g+.11000
+.EURCHF2S|^r.95870|r-.00330
+.EURGBP2S|vr-.83500|r-.01500
+.EURJPY2S|^r-.01550|r-.01200
+.EURNOK2X|^r-1.00200|r-.05200
+.EURSEK2X|^r.04300|r-.01200
*+.EURUSD2S|^g-.75670|g+.01530
+.GBPCHF2S|vg1.79170|g+.00970
+.GBPJPY2S|vg.81750|g+.00100
+.GBPUSD2Y|vg.07630|g+.02830
+.NZDUSD2Y|^g2.71030|g+.00730
+.USDCAD2Y|vr.03360|r-.01590
+.USDCHF2S|vr1.71540|r-.01860
+.USDJPY2Y|vr.74120|r-.02730
#Realzins
+.EURREALZ|y.65000|y--
+.USDREALZ|y-.55000|y--
+.JPYREALZ|y-2.30000|y--
+.CHFREALZ|y-.45000|y--
+.GBPREALZ||y--
+.AUDREALZ|y.55000|y--
+.CADREALZ|y-.71699|y--
+.NOKREALZ|y-.82253|y--
+.SEKREALZ|y.31425|y--
+.NZDREALZ|y2.70000|y--
#Risk Reversal
AUDJPY25R1M|vg-2.2875|g+.0575
AUDUSD25R1M|^g-1.3700|g+.1150
EURAUD25R1M|vr.3800|r-.0600
EURCHF25R1M|vg-2.1575|g+.0425
EURGBP25R1M|^g-.5625|g+.1700
EURJPY25R1M|vr-2.1650|r-.0100
EURNOK25R1M|^g2.2325|g+.1225
EURSEK25R1M|^g1.6175|g+.0275
EURUSD25R1M|vr-1.7100|r-.0075
GBPCHF25R1M|^r-2.2975|r-.0500
GBPJPY25R1M|^r-1.8900|r-.2250
GBPUSD25R1M|^y-1.1450|y--
NZDUSD25R1M|^g-1.2075|g+.1100
USDCAD25R1M|^g1.1600|g+.0125
USDCHF25R1M|^r-1.0400|r-.0175
USDJPY25R1M|vr-.3550|r-.0525
#Volatilität 12M-3M
+.AUDJPY3V|vr-.56500|r-.22000



#Differnz Aktien
+.EAUDJPY|y1.35548|y--
+.EAUDUSD|y.60779|y--
+.EEURAUD|y.10625|y--
+.EEURCHF|y.11346|y--
+.EEURGBP|y.06287|y--
+.EEURJPY|y.14402|y--
+.EEURNOK|y.04714|y--
+.EEURSEK|y.01037|y--
+.EEURUSD|y.06458|y--
+.EGBPCHF|y1.80450|y--
+.EGBPJPY|y2.29053|y--
+.EGBPUSD|y1.02705|y--
+.ENZDUSD|y.06150|y--
+.EUSDCAD|y1.01331|y--
+.EUSDCHF|y1.75697|y--
+.EUSDJPY|y2.23020|y--

FWISEU55|^g1.6000|g+.0100
FWISUS55|vr2.1680|r-.0020
FWISBP55|^g3.0185|g+.0205
FWISJY55|^y.7260|y--`
    },
    twi: {
        alert: true, head: ['Ticker', 'Last'], widths: [0, 69], rows: `
#TWI´s
TWI EUSP|^r115.55
TWI USSP|vg81.49
TWI JPSP|^g103.98
TWI SFSP|^g149.73
TWI BPSP|vg85.97
TWI ADSP|vr128.47
TWI CDSP|^r126.10
TWI NKSP|^g98.13
TWI SKSP|^g104.98
TWI NDSP|^g152.58
#ECO SUPRISE
CESIEUR|y29.20
CESIUSD|y-26.10
CESIJPY|y-14.30
CESICHF|y2.00
CESICHF|y2.00
CESIGBP|y11.00
CESIAUD|y70.60
CESICAD|y-8.60
CESINOK|y26.70
CESISEK|y55.20
CESINZD|y-5.20
CESIG10|y-1.30
#Differenz Suprise
+.AUDJPYS|y84.90001
+.AUDUSDS|y96.70001
+.EURAUDS|y-41.4000
+.EURCHFS|y27.20000
+.EURGBPS|y18.20000
+.EURJPYS|y43.50000
+.EURNOKS|y2.50000
+.EURSEKS|y-26.0000
+.EURUSDS|y55.30000
+.GBPCHFS|y9.00000
+.GBPJPYS|y25.30000
+.GBPUSDS|y37.10001
+.NZDUSDS|y20.90001
+.USDCADS|y-17.5000
+.USDCHFS|y-28.1000
+.USDJPYS|y-11.8000
#Inflation Suprise
CSIIEUR|o-24.87
CSIIUSD|o-22.37
CSIIJPY|o-13.12
CSIICHF|o-7.39
CSIIGBP|o-36.33
CSIIAUD|o-5.49
CSIICAD|o-5.55
CSIINOK|o9.05
CSIISEK|o33.64
CSIINZD|o-27.84
CSIIG10|o-20.77
#Differenz Inf Suprise
+.AUDJPYIS|y7.63000
+.AUDUSDIS|y16.88000
+.EURCHFIS|y-17.4800
+.EURGBPIS|y11.46000
+.EURAUDIS|y-19.3800
+.EURJPYIS|y-11.7500
+.EURNOKIS|y-33.9200
+.EURSEKIS|y-58.5100
+.EURUSDIS|y-2.50000
+.GBPCHFIS|y-28.9400
+.GBPJPYIS|y-23.2100
+.GBPUSDIS|y-13.9600
+.NZDUSDIS|y-5.47000
+.USDCADIS|y-16.8200
+.USDCHFIS|y-14.9800
+.USDJPYIS|y-9.25000`
    }
};

function icon(id, cls) {
    return `<svg class="${cls || 'ic'}"><use href="#${id}"/></svg>`;
}

function cellHtml(text) {
    const m = text.match(/^([\^v]?)([gryo]?)(.*)$/);
    const arrow = m[1] ? icon(m[1] === '^' ? 'i-up' : 'i-dn', 'arrow') : '';
    return `<td class="num ${m[2]}">${arrow}${m[3]}</td>`;
}

function fillTable(id, list) {
    const lead = list.alert ? '<col style="width:23px">' : '';
    let html = '<colgroup>' + lead + list.widths.map(w => w ? `<col style="width:${w}px">` : '<col>').join('') + '</colgroup>';
    html += '<thead><tr>' + (list.alert ? `<th>${icon('i-warn')}</th>` : '') + list.head.map(h => `<th>${h}</th>`).join('') + '</tr></thead><tbody>';
    const span = list.head.length;
    list.rows.slice(1).split('\n').forEach(line => {
        const sel = line[0] === '*';
        if (sel) line = line.slice(1);
        const bang = line[0] === '!';
        if (bang) line = line.slice(1);
        const first = list.alert ? `<td class="bang">${bang ? '!' : ''}</td>` : '';
        if (line[0] === '#' || line === '') {
            html += `<tr>${first}<td class="section" colspan="${span}">${line.slice(1)}</td></tr>`;
            return;
        }
        const open = line[0] === '+';
        if (open) line = line.slice(1);
        const cells = line.split('|');
        const name = cells[0].split('~');
        const flag = name[1] ? `<span class="flag">${name[1]}</span>` : '';
        html += `<tr${sel ? ' class="sel"' : ''}>${first}<td class="ticker${open ? ' open' : ''}">${flag}${name[0]}</td>${cells.slice(1).map(cellHtml).join('')}</tr>`;
    });
    document.getElementById(id).innerHTML = html + '</tbody>';
}

Object.keys(lists).forEach(id => fillTable(id, lists[id]));

// ---------- charts ----------
// view: left, top, right, bottom of the plot in data units
// bars: "x colour high low", candles: "x colour high top bottom low"

function steps(from, gap, count) {
    return Array.from({ length: count }, (_, i) => from + gap * i);
}
const evenHours = ['00:00', '02:00', '04:00', '06:00', '08:00', '10:00', '12:00', '14:00', '16:00', '18:00', '20:00', '22:00'];

const charts = {
    eurusd: {
        name: 'EURUSD Curncy', graph: 'G 171 - Graph 11', range: '5 Min',
        view: [89, 87, 1470, 1463],
        grid: steps(146, 111.8, 12), times: evenHours, minor: steps(202, 111.8, 12),
        prices: [[124, '1.1350'], [332, '1.1340'], [541, '1.1330'], [750, '1.1320'], [960, '1.1310'], [1168, '1.1300'], [1378, '1.1290']],
        days: [[760, '10 Feb 2015']],
        levels: [[641, '#e88f00', 2, '2 2'], [1270, '#e88f00', 1, '', 747]],
        tags: [[829, '1.1316', 1], [1271, '1.1295', 0]],
        bars: '89 g 590 1060,93 g 625 660,98 r 593 650,103 r 620 650,107 r 628 655,112 g 508 655,117 g 600 650,121 r 592 645,126 r 605 640,131 r 592 645,135 r 595 650,140 g 600 645,145 g 590 683,149 g 572 655,154 r 590 642,159 g 500 620,163 g 448 590,168 g 424 530,173 g 424 470,177 r 424 600,182 g 585 615,187 r 570 600,191 r 552 625,196 r 565 668,201 g 590 670,205 g 572 628,210 g 530 600,214 g 468 580,219 r 448 520,224 r 470 510,229 r 448 520,233 r 460 522,238 g 405 490,243 g 340 440,247 r 362 465,252 r 370 470,257 r 402 495,261 r 404 525,266 r 490 555,271 g 510 545,275 r 515 555,280 r 510 590,285 r 525 595,289 g 565 590,294 g 465 580,299 r 403 480,303 r 415 530,308 r 450 585,313 r 510 602,317 r 480 580,322 g 485 558,327 r 463 545,331 r 448 520,336 g 380 510,341 g 280 440,346 r 280 375,350 r 315 425,355 g 315 420,359 r 330 405,364 g 320 420,369 r 300 360,373 r 325 375,378 r 325 375,383 g 314 365,387 g 250 340,392 g 195 315,397 r 214 325,401 r 300 430,406 r 305 440,411 r 385 465,415 g 340 472,420 g 300 385,425 r 300 385,429 r 320 405,434 g 345 400,439 r 380 430,443 r 340 420,448 g 362 412,453 r 372 450,457 r 425 460,462 r 425 465,467 r 430 530,471 g 470 505,476 g 480 525,481 g 462 530,485 g 462 520,490 g 430 490,495 g 425 480,499 g 405 475,504 r 405 470,509 r 430 485,513 r 405 495,518 r 435 505,523 r 462 510,527 r 410 490,532 g 430 478,537 g 400 450,541 g 350 430,546 g 292 380,551 r 300 365,555 g 325 375,560 r 300 352,565 r 280 375,569 r 300 345,574 r 335 500,579 r 430 580,583 r 500 575,588 r 515 570,593 g 480 580,597 g 510 570,602 g 400 555,607 r 430 545,611 r 465 605,616 r 540 705,621 r 615 710,625 r 650 975,630 g 550 940,635 r 515 660,639 r 590 670,644 g 420 680,649 r 490 600,653 r 480 605,658 g 470 600,663 r 460 610,667 r 530 660,672 r 590 830,677 g 570 760,681 r 585 705,686 r 680 820,691 r 650 780,695 r 740 880,700 r 730 900,705 r 820 1035,710 g 895 1088,714 r 945 1070,719 r 950 1215,723 r 1130 1298,728 g 1130 1347,733 g 1115 1220,737 r 1080 1220,741 r 1140 1342,746 g 1245 1320',
        average: '89,582 100,615 112,648 125,655 135,650 150,648 170,622 190,620 208,612 218,592 230,583 245,558 260,540 275,528 298,517 315,521 328,514 345,485 370,462 385,450 400,435 410,430 427,403 440,396 455,382 470,380 485,393 510,408 530,432 540,440 552,433 570,430 590,449 608,453 618,465 626,484 648,506 662,511 680,540 695,585 713,660 725,715 738,775 745,828'
    },
    audjpy: {
        name: 'AUDJPY Curncy', graph: 'G 126 - Graph 11', range: '5 Min',
        view: [83, 87, 1470, 1470],
        grid: steps(141, 112.4, 12), times: evenHours, minor: steps(197, 112.4, 12),
        prices: [[220, '92.900'], [424, '92.800'], [626, '92.700'], [830, '92.600'], [1034, '92.500'], [1238, '92.400'], [1443, '92.300']],
        days: [[758, '10 Feb 2015']],
        levels: [[929, '#e88f00', 2, '2 2'], [1356, '#e00000', 1], [1219, '#e88f00', 1, '', 744]],
        tags: [[799, '92.617', 1], [1220, '92.410', 0]],
        bars: '85 r 880 1080,89 r 890 1060,93 g 1005 1060,98 r 985 1130,103 r 1060 1205,107 r 1180 1337,112 g 1135 1298,117 g 1158 1220,121 g 1105 1218,126 g 992 1185,131 r 1045 1155,135 g 1055 1230,140 g 1000 1130,145 g 925 1030,149 r 910 1000,154 g 892 980,159 g 845 980,163 r 840 975,168 r 910 1090,173 r 998 1155,177 g 1040 1130,182 r 1050 1130,187 r 1065 1120,191 r 1080 1160,196 g 1030 1160,201 g 960 1100,205 g 877 1060,210 g 865 1000,215 r 905 1020,219 r 980 1110,224 g 950 1120,229 g 742 950,234 r 825 1025,238 r 1010 1140,243 g 1045 1125,247 r 1015 1160,252 g 1070 1170,257 r 1100 1150,261 g 1065 1145,266 r 1075 1140,271 r 1095 1175,275 g 1010 1130,280 r 990 1345,284 g 1155 1270,289 g 650 1190,294 g 690 830,299 r 680 860,303 r 785 900,308 g 820 975,313 g 760 880,317 g 735 820,322 g 700 800,327 g 712 790,331 r 735 800,336 g 545 775,341 r 565 700,346 g 535 670,350 g 370 610,355 g 320 480,360 g 195 430,364 r 240 360,369 r 345 435,374 r 355 430,378 g 350 425,383 r 345 495,388 g 405 470,392 r 415 510,397 r 460 545,402 r 515 620,406 g 540 600,411 g 430 590,416 r 445 540,420 r 460 590,425 r 510 600,430 r 560 690,434 g 590 690,439 g 530 655,444 g 440 600,448 r 435 555,453 r 460 530,458 r 490 620,462 r 530 605,467 g 482 600,472 r 490 610,477 r 560 670,481 r 615 740,486 g 605 750,491 r 680 740,495 r 710 770,500 g 700 790,505 r 695 765,510 r 700 800,514 g 715 795,519 g 685 775,524 g 645 745,528 g 550 660,533 g 410 600,538 g 362 480,543 r 395 570,547 r 450 550,552 r 450 530,556 r 470 570,561 r 525 655,566 g 540 660,571 r 560 645,575 g 590 690,580 g 535 660,585 g 510 620,589 r 505 610,594 g 520 635,598 g 355 600,603 r 315 450,608 g 292 455,613 g 295 440,617 r 282 380,621 r 325 640,626 g 465 630,631 r 430 675,636 r 560 690,640 r 540 680,645 r 615 810,650 r 625 740,654 r 625 730,659 g 500 700,664 r 525 630,668 r 605 880,673 g 715 870,678 r 760 915,683 r 770 905,687 g 735 905,692 g 690 800,697 g 740 865,701 r 695 870,706 r 810 935,711 r 815 985,715 r 925 1210,720 g 1070 1265,725 r 1120 1320,730 g 1070 1298,734 r 1075 1250,739 r 1180 1352,744 g 1205 1280',
        average: '84,858 92,885 105,910 125,926 140,945 155,965 170,983 192,1035 203,1048 222,1056 238,1049 255,1034 272,1030 283,1044 298,1031 310,1015 328,970 348,910 362,850 378,780 400,690 413,640 425,580 438,570 450,535 473,502 485,508 500,545 518,590 528,608 550,598 565,603 585,604 593,611 605,595 625,569 640,555 655,548 664,543 685,590 705,627 715,655 725,695 735,740 743,797'
    },
    eurjpy: {
        name: 'EURJPY Curncy', graph: 'G 168 - Graph 11', range: '5 Min', menu: true,
        view: [83, 154, 1470, 1463],
        grid: steps(88, 134.9, 11), times: ['', '03:00', '04:00', '05:00', '06:00', '07:00', '08:00', '09:00', '10:00', '11:00', '12:00'], minor: steps(155, 134.9, 10),
        prices: [[219, '134.60'], [420, '134.50'], [623, '134.40'], [827, '134.30'], [1029, '134.20'], [1233, '134.10'], [1436, '134.00']],
        days: [[777, '10 Feb 2015']],
        levels: [[556, '#aaaaaa', 1], [628, '#e00000', 1], [849, '#00ff00', 1], [1084, '#00ffff', 1], [1319, '#00ff00', 1], [1233, '#e88f00', 1, '', 1268]],
        notes: [[536, '23.6%(134.43)', '#aaaaaa'], [829, '38.2%(134.29)', '#00ff00'], [1065, '50.0%(134.17)', '#00ffff'], [1300, '61.8%(134.06)', '#00ff00']],
        tags: [[744, '134.34', 1], [1234, '134.10', 0]],
        candles: '88 r 880 895 960 960,99 g 900 930 953 1015,110 r 892 926 934 985,121 r 905 938 942 965,132 r 940 950 995 1065,143 g 865 905 995 1015,155 g 828 855 905 945,166 r 840 855 870 905,177 r 858 868 902 963,189 r 875 897 917 998,200 r 897 918 942 970,211 r 905 942 1083 1130,223 g 1010 1032 1083 1108,234 g 897 982 1032 1070,245 g 918 927 980 1020,256 r 875 923 951 985,267 g 843 912 948 977,278 g 795 811 913 943,290 g 665 710 808 835,301 r 693 706 744 800,313 g 682 739 742 772,323 g 693 739 742 770,334 r 712 727 815 830,346 g 695 715 811 872,358 r 705 718 753 800,369 g 722 746 750 800,380 r 738 747 828 845,391 g 740 776 829 829,402 g 682 701 776 780,413 g 645 654 702 705,425 r 652 654 718 740,436 r 712 717 798 803,447 r 755 794 840 848,459 g 810 842 846 867,469 g 680 736 840 850,480 r 705 733 753 768,492 r 738 753 792 825,503 g 725 788 791 795,515 r 770 788 791 848,526 g 728 747 792 835,537 r 735 743 751 780,548 r 712 752 803 820,560 r 780 802 902 915,571 g 848 852 902 905,582 g 825 840 856 880,593 r 825 840 850 892,604 g 825 828 855 893,616 r 812 827 873 885,627 r 853 871 880 908,639 r 850 874 885 915,650 g 780 811 885 895,661 r 798 804 892 893,672 g 825 837 892 930,683 g 785 791 850 860,695 g 712 744 792 800,706 r 692 743 746 790,717 r 712 744 792 795,728 r 742 784 795 830,739 g 715 730 794 818,750 g 660 675 722 748,762 g 640 657 681 710,773 g 482 541 657 675,785 r 465 541 573 580,796 g 512 538 573 615,806 r 510 535 565 606,818 r 538 564 594 650,830 r 545 592 664 722,841 g 588 614 664 685,852 r 610 619 734 750,863 r 710 732 789 856,874 g 712 721 782 825,885 r 705 724 740 750,897 g 642 685 740 765,908 r 635 685 738 822,919 g 630 680 736 765,931 g 588 637 680 680,942 r 612 627 649 703,953 g 588 630 647 717,964 r 580 625 632 680,976 r 610 628 885 915,987 g 510 558 881 935,998 r 450 558 606 625,1009 g 510 567 603 645,1020 g 240 349 559 585,1033 r 290 355 371 412,1044 g 300 315 364 445,1055 r 240 320 342 470,1066 r 245 342 355 420,1077 r 245 349 377 390,1088 r 365 378 594 670,1100 g 450 500 602 650,1111 r 488 503 640 697,1122 r 595 640 713 742,1133 g 558 660 711 728,1144 r 567 665 763 770,1155 r 648 765 822 835,1167 r 703 817 831 940,1178 r 787 831 876 995,1189 r 850 878 891 962,1201 r 878 892 1155 1160,1211 r 1050 1155 1239 1282,1222 g 1127 1229 1242 1332,1235 g 1092 1119 1227 1240,1245 r 975 1116 1140 1195,1257 r 1122 1139 1236 1338,1268 g 1205 1232 1236 1277',
        average: '84,715 98,716 118,723 135,731 150,738 165,743 180,751 196,770 210,792 228,812 250,827 270,830 300,832 318,840 335,850 350,855 370,865 385,868 400,866 425,855 450,843 470,828 485,824 505,823 525,811 550,797 570,785 600,778 625,782 645,793 680,800 710,800 740,797 765,799 785,785 805,771 835,759 860,748 880,747 905,738 925,727 945,712 965,703 985,697 1005,680 1020,660 1035,645 1055,615 1075,593 1100,584 1115,588 1135,597 1155,610 1175,620 1195,635 1210,655 1225,680 1245,703 1267,740'
    },
    gbpusd: {
        name: 'GBPUSD Curncy', graph: 'G 152 - Graph 11', range: '60 Min', menu: true,
        view: [93, 132, 1477, 1470],
        grid: [105, 195, 284, 373, 463, 553, 643, 732, 822, 911, 1002, 1091, 1181, 1270, 1360],
        times: ['', '08:00', '16:00', '', '08:00', '16:00', '', '08:00', '16:00', '', '08:00', '16:00', '', '08:00', '16:00'],
        minor: steps(150, 89.6, 15), breaks: [363, 631, 901, 1169], split: true,
        prices: [[251, '1.5350'], [447, '1.5300'], [643, '1.5250'], [838, '1.5200'], [1034, '1.5150'], [1230, '1.5100'], [1426, '1.5050']],
        days: [[226, '04 Feb 2015'], [497, '05 Feb 2015'], [766, '06 Feb 2015'], [1034, '09 Feb 2015'], [1304, '10 Feb 2015']],
        levels: [[969, '#e88f00', 2, '2 2'], [746, '#e88f00', 1, '', 1295]],
        tags: [[715, '1.5231', 1], [748, '1.5223', 0]],
        candles: '94 r 945 970 1030 1030,105 r 968 1028 1071 1078,115 g 998 1025 1068 1070,127 g 972 1019 1023 1032,139 r 1000 1018 1021 1025,149 g 993 1016 1021 1038,161 g 960 966 1016 1020,172 g 928 957 965 970,183 r 938 957 1002 1020,195 g 950 996 1002 1058,206 g 940 988 993 1075,217 g 867 908 988 1022,228 g 788 877 907 920,239 g 805 817 876 938,250 g 653 692 815 822,262 r 640 692 745 782,272 r 725 747 761 800,284 r 637 762 778 828,295 r 723 778 806 820,306 r 788 807 832 865,318 g 768 801 830 838,329 g 732 752 801 801,340 r 730 753 806 818,351 r 780 807 907 968,362 g 888 910 918 968,373 r 875 908 924 945,385 r 880 925 950 963,397 g 878 920 950 950,407 g 848 873 918 920,418 g 808 818 873 885,430 r 785 817 820 865,440 g 783 811 818 825,452 r 795 810 870 873,463 g 782 809 869 880,474 g 723 747 808 860,486 g 668 682 746 747,497 g 620 668 680 727,508 g 640 661 666 723,519 r 603 667 673 730,530 g 387 444 674 688,542 r 418 444 470 497,553 r 433 473 502 505,564 g 440 481 504 512,575 g 443 451 481 500,587 g 276 300 450 452,597 r 285 301 323 345,609 g 273 306 323 338,621 r 300 307 338 342,631 g 295 315 338 365,643 r 305 312 370 372,655 g 308 320 370 378,665 r 317 321 343 360,676 g 315 324 343 345,687 r 317 323 333 345,699 g 288 323 332 345,710 g 282 307 323 330,721 r 290 307 338 342,732 r 330 339 381 400,743 r 343 378 387 387,755 g 345 373 387 410,766 g 330 343 372 380,777 g 265 323 343 345,788 r 240 323 367 370,800 r 268 367 467 608,812 r 463 467 602 688,822 g 550 568 602 682,833 r 555 565 663 670,845 r 622 660 683 705,856 r 655 683 755 757,867 g 703 706 755 795,879 g 662 694 706 728,889 g 608 675 694 705,901 g 668 697 736 738,911 g 638 686 703 708,923 g 653 680 686 692,935 g 615 628 683 690,945 g 593 600 628 632,957 r 597 600 622 628,968 g 602 619 622 640,979 g 588 597 619 625,990 r 578 594 646 650,1002 g 572 588 646 657,1012 r 578 588 689 705,1023 r 673 689 706 760,1035 r 705 708 767 817,1046 g 745 761 769 812,1058 r 705 759 812 837,1069 g 748 773 812 835,1080 g 660 735 773 785,1091 g 662 683 731 733,1103 r 663 683 775 783,1113 r 750 775 779 803,1125 g 702 713 779 780,1135 r 673 715 720 760,1147 r 700 720 775 782,1159 r 765 775 776 790,1169 r 762 776 789 790,1181 g 748 785 789 795,1192 g 705 735 785 788,1203 r 732 736 747 755,1215 g 683 686 747 757,1226 g 643 681 686 708,1237 r 663 681 695 710,1248 g 662 674 695 705,1259 r 654 671 689 705,1270 g 640 674 689 700,1282 r 643 675 700 715,1293 r 680 700 746 782',
        average: '94,1353 105,1340 125,1311 150,1275 180,1228 205,1192 225,1155 250,1098 270,1043 285,1012 300,985 320,952 340,928 362,913 380,908 405,905 425,894 445,880 465,868 490,848 520,820 535,792 555,765 580,740 610,700 640,658 670,615 700,565 720,523 745,485 770,455 790,428 800,420 820,412 850,412 870,423 910,452 940,485 975,513 1010,543 1030,565 1055,603 1075,625 1095,643 1115,670 1135,685 1160,700 1200,708 1275,708 1293,715'
    },
    rxa: {
        name: 'RXA Comdty', graph: 'G 136 - Graph 14', range: '60 Min', menu: true,
        view: [93, 154, 1477, 1463],
        grid: [], times: [], minor: [], breaks: [336, 604, 873, 1142],
        labels: [[201, '04'], [469, '05'], [738, '06'], [1008, '09'], [1276, '10']],
        prices: [[277, '159.00'], [533, '158.80'], [788, '158.60'], [1043, '158.40'], [1299, '158.20']],
        days: [[739, 'Feb 2015']],
        levels: [[392, '#e88f00', 2, '2 2'], [585, '#e88f00', 1, '', 1183]],
        over: [[530, '#ff0000', 5], [1378, '#00ff00', 5]],
        tags: [[587, '158.76', 0], [642, '158.72', 1]],
        candles: '102 g 315 367 525 632,120 g 227 290 367 467,139 r 276 290 481 505,155 r 377 480 521 585,174 r 480 506 650 812,191 r 480 633 686 710,210 r 648 686 800 888,228 g 735 762 788 825,245 g 620 660 776 862,264 g 632 648 672 710,282 g 570 621 649 658,299 g 366 468 622 787,336 r 150 150 277 328,353 r 154 277 315 404,372 r 303 328 443 557,390 r 340 457 570 607,407 r 568 570 738 787,426 r 632 738 751 850,442 r 711 737 943 1143,461 g 711 863 942 990,480 g 735 737 864 940,496 r 686 737 827 862,515 g 735 800 827 827,533 r 798 800 826 888,550 g 798 814 815 888,569 g 775 814 815 888,604 g 672 724 827 827,622 g 570 672 725 735,640 g 328 352 660 697,658 r 351 352 480 595,676 r 457 481 571 632,694 g 415 443 586 595,712 r 340 432 751 952,731 g 430 650 751 900,748 r 607 633 966 1016,766 r 926 979 1007 1080,785 r 965 992 1030 1090,802 r 990 1029 1119 1143,820 g 1005 1018 1133 1143,839 g 952 979 1018 1028,874 g 760 799 815 978,891 g 466 521 800 802,909 g 340 368 522 632,928 g 187 227 353 415,944 r 154 227 265 277,963 r 187 251 342 377,982 r 212 341 416 480,999 r 415 416 635 670,1017 g 404 405 635 658,1036 r 404 416 649 650,1053 g 543 622 649 658,1071 g 543 608 622 623,1088 r 545 596 622 632,1107 r 585 622 686 710,1142 r 735 762 826 926,1160 g 596 608 826 952,1180 g 532 585 597 685',
        average: '113,154 125,160 138,177 165,225 195,270 222,318 243,352 265,380 285,410 299,430 335,444 355,463 385,485 408,508 425,520 445,546 462,564 480,576 500,596 532,621 550,630 570,636 605,639 624,641 640,630 658,630 680,638 712,650 730,654 750,667 768,678 785,682 810,700 838,717 875,723 908,729 930,726 965,711 982,700 998,696 1018,679 1050,668 1105,651 1142,650 1180,639'
    }
};

const spans = ['1H5D', '1H10D', '4H20D', '4H1M', '3M', '1Y', '10Y', 'Max'];
const tools = [['cursor'], ['draw'], ['trend'], ['channel'], ['hline'], ['ray'], ['range', '%', 'tool-pct'], ['range', '$', 'tool-usd'], ['seg'], ['reg', 'R', 'tool-reg']];

function buildWindow(el, c) {
    const hourly = c.range === '60 Min';
    el.innerHTML = `
        <div class="chart-title">
            <span class="tools">${icon('i-down')}${icon('i-target')}<span>${c.graph}</span></span>
            <span class="tools name">${icon('i-grip')}${c.name}${icon('i-down')}${icon('i-link')}</span>
            <span class="tools"><span>Options</span>${icon(c.menu ? 'i-less' : 'i-more')}<span>?</span>${icon('i-pop')}${icon('i-max')}${icon('i-close')}</span>
        </div>
        ${c.menu ? '<div class="chart-menu"><span>Actions</span><span>Edit</span></div>' : ''}
        <div class="chart-bar">
            ${spans.map((s, i) => `<button${hourly && i === 0 ? ' class="on"' : ''}>${s}</button>`).join('')}
            <button class="${hourly ? '' : 'on'}">${c.range} ▼</button>
            <span class="spacer"></span>
            <button>«</button>
            <button class="study">${icon('i-study')}Security/Study</button>
            <button class="wide" aria-label="Flag">${icon('i-flag')}</button>
            <button class="wide" aria-label="Notes">${icon('i-note')}</button>
            <button class="wide" aria-label="Settings">${icon('i-gear')}</button>
        </div>
        <div class="chart-main">
            <div class="palette">
                <div class="fav"><div class="knob">${icon('i-right')}</div><div class="label">/ Favorites</div></div>
                <div class="tool-list">${tools.map(t => `<button aria-label="${t[0]}">${icon('t-' + t[0])}${t[1] ? `<span class="${t[2]}">${t[1]}</span>` : ''}</button>`).join('')}</div>
            </div>
            <div class="plot"></div>
        </div>`;
}

function drawChart(el, c) {
    const W = el.clientWidth, H = el.clientHeight;
    const pw = W - 50, ph = H - 33;
    const [x0, y0, x1, y1] = c.view;
    const X = v => Math.round((v - x0) / (x1 - x0) * pw) + 0.5;
    const Y = v => Math.round((v - y0) / (y1 - y0) * ph) + 0.5;
    const line = (xa, ya, xb, yb, col, w, dash) =>
        `<line x1="${xa}" y1="${ya}" x2="${xb}" y2="${yb}" stroke="${col}" stroke-width="${w || 1}"${dash ? ` stroke-dasharray="${dash}"` : ''}/>`;
    const colour = k => k === 'g' ? '#00ff00' : '#ff0000';
    let s = `<rect width="${pw}" height="${ph}" fill="#fff"/>`;

    // grid
    c.grid.forEach(v => s += line(X(v), 0, X(v), ph, '#777', 1, '3 3'));
    (c.breaks || []).forEach(v => s += line(X(v), 0, X(v), ph, '#777', 1, '10 5'));
    c.prices.forEach(p => s += line(0, Y(p[0]), pw, Y(p[0]), '#777', 1, '1 1'));
    (c.levels || []).forEach(l => s += line(l[4] ? X(l[4]) : 0, Y(l[0]), pw, Y(l[0]), l[1], l[2], l[3]));

    (c.bars || '').split(',').filter(Boolean).forEach(b => {
        const [x, k, hi, lo] = b.split(' ');
        const a = Y(+hi), z = Y(+lo), q = (z - a) / 4;
        s += line(X(+x), a, X(+x), z, colour(k)) + line(X(+x) + 0.5, a + q, X(+x) + 0.5, z - q, colour(k), 2);
    });
    (c.candles || '').split(',').filter(Boolean).forEach(b => {
        const [x, k, hi, top, bot, lo] = b.split(' ');
        const h = Y(+bot) - Y(+top);
        s += line(X(+x), Y(+hi), X(+x), Y(+lo), '#000');
        s += `<rect x="${X(+x) - 2}" y="${Y(+top)}" width="4" height="${Math.max(h, 1)}" fill="${colour(k)}" stroke="${h > 2 ? '#000' : colour(k)}"/>`;
    });
    const pts = c.average.split(' ').map(p => p.split(',')).map(p => `${X(+p[0])},${Y(+p[1])}`).join(' ');
    s += `<polyline points="${pts}" fill="none" stroke="#0850a8" stroke-width="2"/>`;
    (c.over || []).forEach(l => s += line(0, Y(l[0]), pw, Y(l[0]), l[1], l[2]));
    (c.notes || []).forEach(n => s += `<text x="2" y="${Y(n[0]) + 4}" style="fill:${n[2]}">${n[1]}</text>`);

    // axes
    s += `<rect x="${pw}" width="50" height="${H}" fill="#000"/><rect y="${ph}" width="${W}" height="33" fill="#000"/>`;
    const gap = c.prices[1][0] - c.prices[0][0];
    c.prices.forEach(p => {
        const y = Y(p[0]);
        s += `<path d="M${pw} ${y - 3}l8 3-8 3z" fill="#fff"/>`;
        // a tag drawn right over a price replaces it
        if (!c.tags.some(t => Math.abs(t[0] - p[0]) < 10)) s += `<text x="${pw + 10}" y="${y + 4}">${p[1]}</text>`;
        s += line(pw, Y(p[0] + gap / 2), pw + 4, Y(p[0] + gap / 2), '#fff');
    });
    c.grid.forEach((v, i) => {
        s += line(X(v), ph, X(v), ph + 4, '#fff');
        if (c.times[i]) s += `<text class="time" x="${X(v) + 1}" y="${ph + 14}">${c.times[i]}</text>`;
    });
    c.minor.forEach(v => s += line(X(v), ph, X(v), ph + 3, '#fff'));
    (c.labels || []).forEach(l => s += `<text class="time" x="${X(l[0])}" y="${ph + 14}">${l[1]}</text>`);
    c.days.forEach(d => s += `<text class="time" x="${X(d[0])}" y="${ph + 30}">${d[1]}</text>`);
    if (c.split) c.breaks.forEach(v => s += line(X(v), ph, X(v), H, '#fff'));
    c.tags.forEach(t => {
        const y = Y(t[0]);
        s += `<path d="M${pw + 2} ${y}l5-9H${W}v18H${pw + 7}z" fill="${t[2] ? '#0050a8' : '#fff'}"/>`;
        s += `<text x="${pw + 9}" y="${y + 4}"${t[2] ? '' : ' class="tag-dark"'}>${t[1]}</text>`;
    });
    el.innerHTML = `<svg width="${W}" height="${H}">${s}</svg>`;
}

const chartWins = document.querySelectorAll('.chart-win');
chartWins.forEach(el => buildWindow(el, charts[el.dataset.chart]));

function drawAll() {
    chartWins.forEach(el => { el.querySelector('.plot').innerHTML = ''; });
    chartWins.forEach(el => drawChart(el.querySelector('.plot'), charts[el.dataset.chart]));
}
drawAll();
window.addEventListener('resize', drawAll);
```
